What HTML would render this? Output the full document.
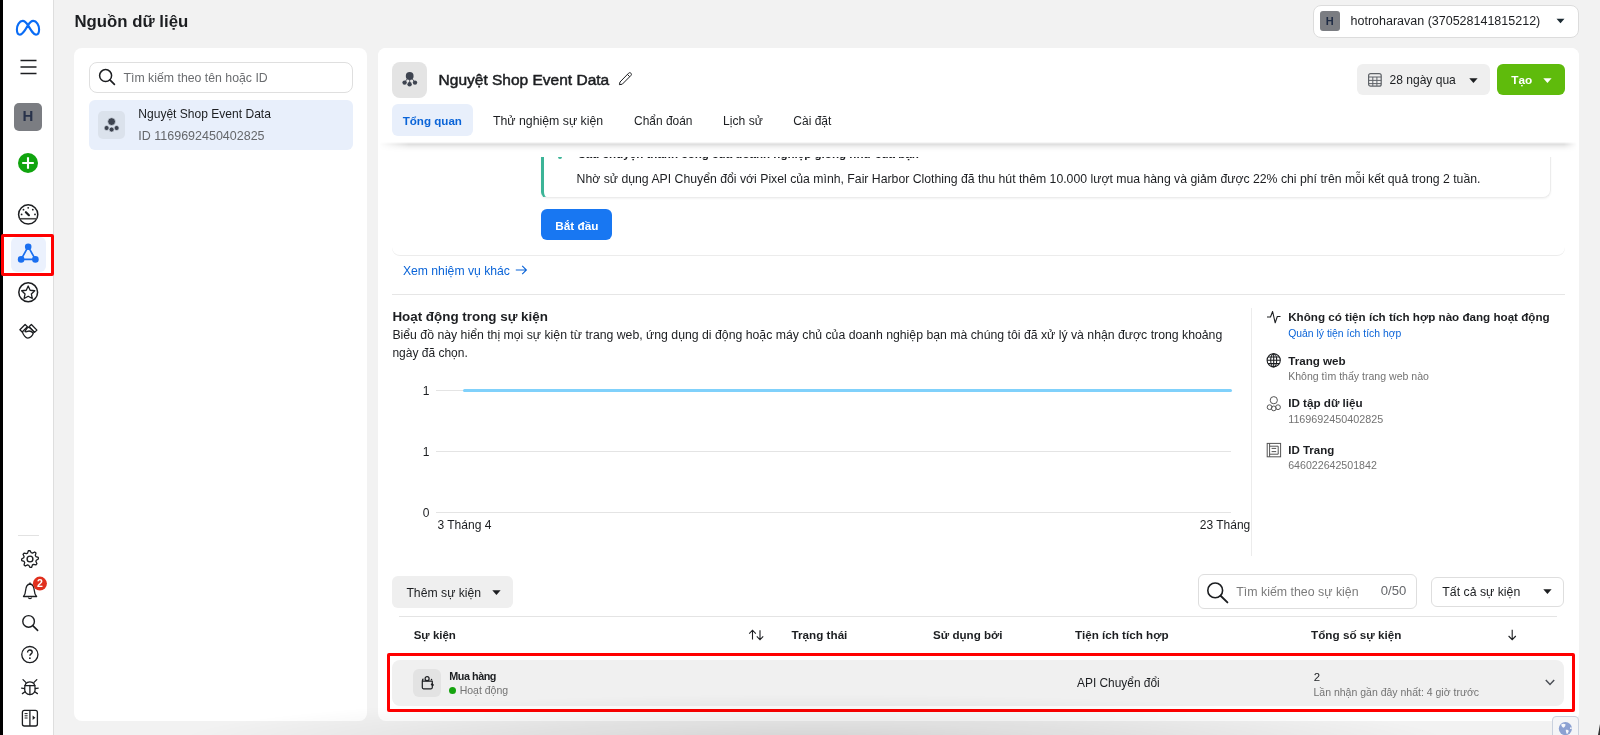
<!DOCTYPE html>
<html><head><meta charset="utf-8">
<style>
*{box-sizing:border-box;margin:0;padding:0}
html,body{width:1600px;height:735px;overflow:hidden}
body{background:#f2f2f2;font-family:"Liberation Sans",sans-serif;color:#1c1e21;position:relative}
.a{position:absolute;white-space:nowrap;line-height:1}
svg.a{overflow:visible}
</style></head><body>
<div id="root" style="position:absolute;left:0;top:0;width:1600px;height:735px;will-change:transform">
<div class="a" style="left:0px;top:0px;width:3px;height:735px;background:#000"></div>
<div class="a" style="left:3px;top:0px;width:50px;height:735px;background:#fff"></div>
<div class="a" style="left:53px;top:0px;width:1px;height:735px;background:#dedede"></div>
<svg class="a" style="left:0px;top:0px" width="50" height="50" viewBox="0 0 50 50"><path d="M28 25.2 C29.6 22.6 31.2 20.9 33.2 20.9 C36.6 20.9 39.1 25.2 39.1 29.4 C39.1 32.6 37.8 34.6 36 34.6 C33.4 34.6 31.4 31 28 25.2 C26 22.2 24.6 20.9 22.8 20.9 C19.4 20.9 16.9 25.2 16.9 29.4 C16.9 32.6 18.2 34.6 20 34.6 C22.8 34.6 25.6 29.4 28 25.2 Z" fill="none" stroke="#0a6cf5" stroke-width="2.1"/></svg>
<svg class="a" style="left:20px;top:59px" width="17" height="16" viewBox="0 0 17 16"><path d="M0.5 1.5h16M0.5 8h16M0.5 14.5h16" stroke="#1c1e21" stroke-width="1.6"/></svg>
<div class="a" style="left:14px;top:102.5px;width:28px;height:28px;border-radius:5px;background:#7b7d82;color:#28324a;font-weight:bold;font-size:15px;text-align:center;line-height:26.5px">H</div>
<svg class="a" style="left:18px;top:153px" width="20" height="20" viewBox="0 0 20 20"><circle cx="10" cy="10" r="10" fill="#10a40e"/><path d="M10 4.2v11.6M4.2 10h11.6" stroke="#fff" stroke-width="2.1"/></svg>
<svg class="a" style="left:10px;top:195px" width="36" height="36" viewBox="0 0 36 36"><circle cx="18.2" cy="19.45" r="9.6" fill="none" stroke="#1c1e21" stroke-width="1.5"/><path d="M9.4 23.75h17.6" stroke="#4a4a4a" stroke-width="1.6"/><path d="M15.9 17.2l3 3" stroke="#1c1e21" stroke-width="2.2" stroke-linecap="round"/><g fill="#1c1e21"><circle cx="11.6" cy="19.4" r="0.9"/><circle cx="13.5" cy="14.7" r="0.9"/><circle cx="18.2" cy="12.8" r="0.9"/><circle cx="22.8" cy="14.7" r="0.9"/><circle cx="25" cy="19.4" r="0.9"/></g></svg>
<div class="a" style="left:11px;top:236.5px;width:35px;height:35px;background:#ebf1fd;border-radius:6px"></div>
<svg class="a" style="left:10px;top:236px" width="36" height="36" viewBox="0 0 36 36"><path d="M18.2 10.7 L11.1 23.4 H25.4 Z" fill="none" stroke="#1a6ff0" stroke-width="1.7" stroke-linejoin="round"/><g fill="#1a6ff0"><circle cx="18.2" cy="10.7" r="3.3"/><circle cx="11.1" cy="23.4" r="3.3"/><circle cx="25.4" cy="23.4" r="3.3"/></g></svg>
<div class="a" style="left:1.1px;top:234.1px;width:52.6px;height:42.2px;border:3.2px solid #f00;border-radius:2px"></div>
<svg class="a" style="left:0px;top:0px" width="50" height="350" viewBox="0 0 50 350"><circle cx="28.2" cy="292.25" r="9.4" fill="none" stroke="#1c1e21" stroke-width="1.5"/><path d="M28.20 286.00 L30.14 290.23 L34.76 290.77 L31.34 293.92 L32.26 298.48 L28.20 296.20 L24.14 298.48 L25.06 293.92 L21.64 290.77 L26.26 290.23 Z" fill="none" stroke="#1c1e21" stroke-width="1.3" stroke-linejoin="round"/></svg>
<svg class="a" style="left:0px;top:0px" width="50" height="350" viewBox="0 0 50 350"><g fill="none" stroke="#1c1e21" stroke-width="1.3" stroke-linejoin="round" stroke-linecap="round"><path d="M19.9 329.8 L25.1 324.5 L27.4 326.8 L22.2 332 Z"/><path d="M31.4 324.5 L36.9 330.1 L34.6 332.4 L29.1 326.8 Z"/><path d="M22.4 331.8 C23.2 335 25.8 338.2 27.8 338.2 C30 338.2 33 335.6 33.2 333"/><path d="M25.2 331.6 C26.4 332.6 27.8 331 29 331 C30.8 331 32.2 332 33.2 333"/><path d="M25.2 331.6 L25.6 330.4 C26.6 328.4 27.6 327.4 28.4 327.4 C29.4 327.4 31.6 329.2 33.6 331.6"/></g></svg>
<div class="a" style="left:18px;top:534.5px;width:21px;height:1px;background:#e2e2e2"></div>
<svg class="a" style="left:12px;top:540.5px" width="36" height="36" viewBox="0 0 36 36"><path d="M26.24 16.36 L26.40 18.00 L24.28 19.25 L23.91 20.45 L24.98 22.67 L23.94 23.94 L21.56 23.32 L20.45 23.91 L19.64 26.24 L18.00 26.40 L16.75 24.28 L15.55 23.91 L13.33 24.98 L12.06 23.94 L12.68 21.56 L12.09 20.45 L9.76 19.64 L9.60 18.00 L11.72 16.75 L12.09 15.55 L11.02 13.33 L12.06 12.06 L14.44 12.68 L15.55 12.09 L16.36 9.76 L18.00 9.60 L19.25 11.72 L20.45 12.09 L22.67 11.02 L23.94 12.06 L23.32 14.44 L23.91 15.55 Z" fill="none" stroke="#1c1e21" stroke-width="1.3" stroke-linejoin="round"/><circle cx="18" cy="18" r="2.9" fill="none" stroke="#1c1e21" stroke-width="1.4"/></svg>
<svg class="a" style="left:12px;top:576px" width="36" height="30" viewBox="0 0 36 30"><path d="M11.5 20.5 C12.8 19 13.4 17.6 13.6 14.5 C13.9 10.8 15.6 8.2 18 8 C20.4 8.2 22 10.8 22.3 14.5 C22.5 17.6 23.2 19 24.6 20.5 Z" fill="none" stroke="#1c1e21" stroke-width="1.3" stroke-linejoin="round"/><path d="M16.4 21.5 C16.6 23 19.4 23 19.6 21.5" fill="none" stroke="#1c1e21" stroke-width="1.2"/><path d="M18 6.5v1.6" stroke="#1c1e21" stroke-width="1.3"/></svg>
<svg class="a" style="left:32px;top:576px" width="16" height="16" viewBox="0 0 16 16"><circle cx="7.9" cy="7.6" r="7" fill="#e0301e"/><text x="7.9" y="11.4" font-family="Liberation Sans" font-weight="bold" font-size="10.5" fill="#fff" text-anchor="middle">2</text></svg>
<svg class="a" style="left:12px;top:604px" width="36" height="36" viewBox="0 0 36 36"><circle cx="16.6" cy="17.4" r="5.8" fill="none" stroke="#1c1e21" stroke-width="1.4"/><path d="M20.8 21.6 L25.6 26.4" stroke="#1c1e21" stroke-width="1.6" stroke-linecap="round"/></svg>
<svg class="a" style="left:12px;top:635px" width="36" height="36" viewBox="0 0 36 36"><circle cx="17.85" cy="19.6" r="8.1" fill="none" stroke="#1c1e21" stroke-width="1.3"/><path d="M15.6 17.6 C15.6 15.8 16.6 15 17.9 15 C19.2 15 20.2 15.9 20.2 17.2 C20.2 18.8 17.9 19 17.9 20.8" fill="none" stroke="#1c1e21" stroke-width="1.4"/><circle cx="17.9" cy="23.2" r="0.9" fill="#1c1e21"/></svg>
<svg class="a" style="left:12px;top:670px" width="36" height="36" viewBox="0 0 36 36"><g fill="none" stroke="#1c1e21" stroke-width="1.3" stroke-linecap="round"><path d="M17.9 11.8 C14.6 11.8 12.6 14.6 12.6 18.6 C12.6 22.4 14.8 24.6 17.9 24.6 C21 24.6 23.2 22.4 23.2 18.6 C23.2 14.6 21.2 11.8 17.9 11.8 Z"/><path d="M17.9 15.4v9.2M12.8 15.6h10.2"/><path d="M13.8 12.4 L11 9.6 M22 12.4 L24.8 9.6 M12.6 18.6 L9.6 18.2 M23.2 18.6 L26.2 18.2 M13 21.8 L10.4 23.6 M22.8 21.8 L25.4 23.6"/></g></svg>
<svg class="a" style="left:12px;top:705px" width="36" height="30" viewBox="0 0 36 30"><rect x="10.4" y="5.4" width="15" height="15.6" rx="2" fill="none" stroke="#1c1e21" stroke-width="1.3"/><path d="M17.9 5.4v15.6" stroke="#1c1e21" stroke-width="1.3"/><path d="M12.6 8.6h3M12.6 10.8h3M12.6 13h3" stroke="#1c1e21" stroke-width="1"/><path d="M20.6 10.6 L23.4 12.8 L20.6 15 Z" fill="#1c1e21"/></svg>
<div class="a" style="left:74.5px;top:14px;font-size:16.8px;font-weight:bold;color:#1c1e21;">Nguồn dữ liệu</div>
<div class="a" style="left:1313px;top:5px;width:266px;height:32.5px;background:#fff;border:1px solid #dcdcdc;border-radius:8px"></div>
<div class="a" style="left:1320px;top:11px;width:19.5px;height:20px;border-radius:3px;background:#7b7d82;color:#1e2b44;font-weight:bold;font-size:11px;text-align:center;line-height:20px">H</div>
<div class="a" style="left:1350.5px;top:15px;font-size:12.5px;color:#1c1e21;">hotroharavan (370528141815212)</div>
<svg class="a" style="left:1556px;top:18px" width="9" height="6" viewBox="0 0 9 6"><path d="M0.5 0.8 H8.5 L4.5 5.2 Z" fill="#1c2b33"/></svg>
<div class="a" style="left:74px;top:47.5px;width:293px;height:673.2px;background:#fff;border-radius:8px"></div>
<div class="a" style="left:88.5px;top:61.5px;width:264px;height:31.5px;border:1px solid #dfdfdf;border-radius:8px"></div>
<svg class="a" style="left:97px;top:67px" width="20" height="20" viewBox="0 0 20 20"><circle cx="8.6" cy="8.6" r="6" fill="none" stroke="#1c1e21" stroke-width="1.5"/><path d="M12.9 12.9 L17.4 17.4" stroke="#1c1e21" stroke-width="1.7" stroke-linecap="round"/></svg>
<div class="a" style="left:123.5px;top:72px;font-size:12.3px;color:#6b6d70;">Tìm kiếm theo tên hoặc ID</div>
<div class="a" style="left:89px;top:100px;width:263.5px;height:49.5px;background:#e8effb;border-radius:6px"></div>
<div class="a" style="left:97.8px;top:111px;width:27.6px;height:27.8px;background:#dbe2ec;border-radius:5px"></div>
<svg class="a" style="left:97.8px;top:111px" width="28" height="28" viewBox="0 0 28 28"><g fill="#3e4450" stroke="#dbe2ec" stroke-width="0.7"><circle cx="13.6" cy="10.6" r="3.9"/><circle cx="8.6" cy="17" r="2.5"/><circle cx="18.6" cy="17" r="2.5"/><circle cx="13.6" cy="18.6" r="2.5"/></g></svg>
<div class="a" style="left:138.3px;top:108px;font-size:12.05px;color:#1c1e21;">Nguyệt Shop Event Data</div>
<div class="a" style="left:138.3px;top:130px;font-size:12.5px;color:#65676b;">ID 1169692450402825</div>
<div class="a" style="left:378px;top:47.5px;width:1200.5px;height:673.2px;background:#fff;border-radius:8px"></div>
<div class="a" style="left:392px;top:140px;width:1173px;height:114.5px;border-radius:0 0 8px 8px;box-shadow:0 1px 0 rgba(0,0,0,0.075)"></div>
<div class="a" style="left:541px;top:140px;width:1009.5px;height:57.7px;border:1px solid #ececec;border-left:3px solid #3cb497;border-top:none;border-radius:0 0 8px 6px;box-shadow:0 1px 2px rgba(0,0,0,0.05)"></div>
<div class="a" style="left:577.5px;top:148px;font-size:11.6px;font-weight:bold;color:#1c1e21;">Câu chuyện thành công của doanh nghiệp giống như của bạn</div>
<div class="a" style="left:557.5px;top:155px;width:4px;height:4px;border-radius:2px;background:#3cb497"></div>
<div class="a" style="left:576.6px;top:173px;font-size:12.25px;color:#1c1e21;">Nhờ sử dụng API Chuyển đổi với Pixel của mình, Fair Harbor Clothing đã thu hút thêm 10.000 lượt mua hàng và giảm được 22% chi phí trên mỗi kết quả trong 2 tuần.</div>
<div class="a" style="left:541.4px;top:208.8px;width:70.7px;height:31.4px;background:#1877f2;border-radius:6px"></div>
<div class="a" style="left:555.3px;top:220px;font-size:11.75px;font-weight:bold;color:#fff;">Bắt đầu</div>
<div class="a" style="left:402.9px;top:265px;font-size:12.2px;color:#0a64d8;">Xem nhiệm vụ khác</div>
<svg class="a" style="left:514px;top:263px" width="14" height="14" viewBox="0 0 14 14"><path d="M1.8 7h10.6M8.2 2.8 L12.4 7 L8.2 11.2" fill="none" stroke="#0a64d8" stroke-width="1.1"/></svg>
<div class="a" style="left:392px;top:293.5px;width:1173px;height:1.2px;background:#e6e6e6"></div>
<div class="a" style="left:392.4px;top:310px;font-size:13.4px;font-weight:bold;color:#1c1e21;">Hoạt động trong sự kiện</div>
<div class="a" style="left:392.4px;top:329px;font-size:12.28px;color:#1c1e21;">Biểu đồ này hiển thị mọi sự kiện từ trang web, ứng dụng di động hoặc máy chủ của doanh nghiệp bạn mà chúng tôi đã xử lý và nhận được trong khoảng</div>
<div class="a" style="left:392.4px;top:347px;font-size:12.0px;color:#1c1e21;">ngày đã chọn.</div>
<div class="a" style="left:436px;top:390.2px;width:795px;height:1.2px;background:#e4e4e4"></div>
<div class="a" style="left:422.8px;top:385px;font-size:12.0px;color:#1c1e21;">1</div>
<div class="a" style="left:436px;top:450.79999999999995px;width:795px;height:1.2px;background:#e4e4e4"></div>
<div class="a" style="left:422.8px;top:446px;font-size:12.0px;color:#1c1e21;">1</div>
<div class="a" style="left:436px;top:511.6px;width:795px;height:1.2px;background:#e4e4e4"></div>
<div class="a" style="left:422.8px;top:507px;font-size:12.0px;color:#1c1e21;">0</div>
<div class="a" style="left:462.6px;top:389.1px;width:769px;height:3px;background:#80d1fb;border-radius:1.5px"></div>
<div class="a" style="left:437.4px;top:519px;font-size:12.05px;color:#1c1e21;">3 Tháng 4</div>
<div class="a" style="left:1199.8px;top:519px;font-size:12.0px;color:#1c1e21;">23 Tháng</div>
<div class="a" style="left:1251.3px;top:308px;width:1.2px;height:248px;background:#ececec"></div>
<svg class="a" style="left:1266px;top:309px" width="16" height="16" viewBox="0 0 16 16"><path d="M1 8 H4.5 L6.6 2.5 L9.2 13.8 L11.3 7.5 H14.5" fill="none" stroke="#1c1e21" stroke-width="1.1" stroke-linejoin="round"/></svg>
<div class="a" style="left:1288.2px;top:311px;font-size:11.63px;font-weight:bold;color:#1c1e21;">Không có tiện ích tích hợp nào đang hoạt động</div>
<div class="a" style="left:1288.2px;top:329px;font-size:10.4px;color:#0a64d8;">Quản lý tiện ích tích hợp</div>
<svg class="a" style="left:1266px;top:352px" width="16" height="16" viewBox="0 0 16 16"><g fill="none" stroke="#1c1e21" stroke-width="1.1"><circle cx="7.7" cy="8.3" r="6.6"/><ellipse cx="7.7" cy="8.3" rx="3" ry="6.6"/><path d="M1.1 8.3h13.2M2 5h11.4M2 11.6h11.4M7.7 1.7v13.2"/></g></svg>
<div class="a" style="left:1288.2px;top:355px;font-size:11.63px;font-weight:bold;color:#1c1e21;">Trang web</div>
<div class="a" style="left:1288.2px;top:371px;font-size:10.55px;color:#737373;">Không tìm thấy trang web nào</div>
<svg class="a" style="left:1266px;top:395px" width="16" height="17" viewBox="0 0 16 17"><g fill="none" stroke="#555" stroke-width="1"><circle cx="7.8" cy="5.2" r="3.6"/><circle cx="3.6" cy="12.2" r="2.4"/><circle cx="7.8" cy="13.4" r="2.4"/><circle cx="12" cy="12.2" r="2.4"/></g></svg>
<div class="a" style="left:1288.2px;top:397px;font-size:11.67px;font-weight:bold;color:#1c1e21;">ID tập dữ liệu</div>
<div class="a" style="left:1288.2px;top:414px;font-size:10.77px;color:#737373;">1169692450402825</div>
<svg class="a" style="left:1266px;top:442px" width="16" height="16" viewBox="0 0 16 16"><g fill="none" stroke="#555" stroke-width="1"><rect x="1.2" y="1.4" width="13.4" height="13.4"/><path d="M3.6 1.4v13.4M3.6 4.2h8.6v8H3.6"/><path d="M5.6 6.4h4.6M5.6 9.6h4.6"/></g></svg>
<div class="a" style="left:1288.2px;top:445px;font-size:11.5px;font-weight:bold;color:#1c1e21;">ID Trang</div>
<div class="a" style="left:1288.2px;top:460px;font-size:10.64px;color:#737373;">646022642501842</div>
<div class="a" style="left:392.2px;top:576px;width:120.7px;height:31.6px;background:#efefef;border-radius:6px"></div>
<div class="a" style="left:406.4px;top:587px;font-size:12.23px;color:#1c1e21;">Thêm sự kiện</div>
<svg class="a" style="left:491.5px;top:589.5px" width="9" height="6" viewBox="0 0 9 6"><path d="M0.3 0.3 H8.6 L4.45 4.9 Z" fill="#1c1e21"/></svg>
<div class="a" style="left:1198px;top:574.3px;width:218.7px;height:34.6px;border:1px solid #dedede;border-radius:6px"></div>
<svg class="a" style="left:1205px;top:580px" width="24" height="24" viewBox="0 0 24 24"><circle cx="10.2" cy="10.4" r="7.4" fill="none" stroke="#1c1e21" stroke-width="1.6"/><path d="M15.6 15.8 L22.4 22.4" stroke="#1c1e21" stroke-width="1.9" stroke-linecap="round"/></svg>
<div class="a" style="left:1236.3px;top:586px;font-size:12.37px;color:#7b7b7b;">Tìm kiếm theo sự kiện</div>
<div class="a" style="left:1380.8px;top:584px;font-size:13.1px;color:#65676b;">0/50</div>
<div class="a" style="left:1431.3px;top:576.5px;width:132.8px;height:30.7px;border:1px solid #dedede;border-radius:6px"></div>
<div class="a" style="left:1442.3px;top:586px;font-size:12.31px;color:#1c1e21;">Tất cả sự kiện</div>
<svg class="a" style="left:1542.6px;top:589.3px" width="9" height="6" viewBox="0 0 9 6"><path d="M0.3 0.3 H8.6 L4.45 4.9 Z" fill="#1c1e21"/></svg>
<div class="a" style="left:399px;top:615.8px;width:1158px;height:1px;background:#e4e4e4"></div>
<div class="a" style="left:413.7px;top:630px;font-size:11.5px;font-weight:bold;color:#1c1e21;">Sự kiện</div>
<svg class="a" style="left:748px;top:629px" width="17" height="12" viewBox="0 0 17 12"><path d="M4.5 10.6V1.4M1.2 4.6 L4.5 1.2 L7.8 4.6M12 1.2v9.2M8.8 7.4 L12 10.8 L15.2 7.4" fill="none" stroke="#1c1e21" stroke-width="1.1"/></svg>
<div class="a" style="left:791.6px;top:629px;font-size:11.68px;font-weight:bold;color:#1c1e21;">Trạng thái</div>
<div class="a" style="left:933px;top:629px;font-size:11.62px;font-weight:bold;color:#1c1e21;">Sử dụng bởi</div>
<div class="a" style="left:1075px;top:629px;font-size:11.66px;font-weight:bold;color:#1c1e21;">Tiện ích tích hợp</div>
<div class="a" style="left:1311.1px;top:629px;font-size:11.7px;font-weight:bold;color:#1c1e21;">Tổng số sự kiện</div>
<svg class="a" style="left:1506px;top:629px" width="12" height="12" viewBox="0 0 12 12"><path d="M6.2 0.8v9.6M2.6 7 L6.2 10.6 L9.8 7" fill="none" stroke="#1c1e21" stroke-width="1.1"/></svg>
<div class="a" style="left:392.2px;top:659.8px;width:1172.2px;height:46.4px;background:#f0f0f0;border-radius:8px"></div>
<div class="a" style="left:413.3px;top:669px;width:28px;height:28.4px;background:#e3e3e3;border-radius:6px"></div>
<svg class="a" style="left:413.3px;top:669px" width="28" height="28" viewBox="0 0 28 28"><g fill="none" stroke="#1c1e21" stroke-width="1.2" stroke-linejoin="round"><path d="M9.3 12.2 H19.3 V18.6 Q19.3 19.8 18.1 19.8 H10.5 Q9.3 19.8 9.3 18.6 Z"/><circle cx="14.1" cy="9.7" r="2"/><path d="M9.4 12 C9.4 10.8 9.8 10.2 10.4 9.8"/></g><circle cx="18.5" cy="10.4" r="0.75" fill="#1c1e21"/><path d="M17.6 15.2 L19.2 13.9 L21.1 15.9 L19.5 17.6 Z" fill="#1c1e21"/></svg>
<div class="a" style="left:449.2px;top:671px;font-size:10.8px;font-weight:bold;color:#1c1e21;letter-spacing:-0.45px">Mua hàng</div>
<div class="a" style="left:448.6px;top:687px;width:7px;height:7px;border-radius:50%;background:#16a40f"></div>
<div class="a" style="left:459.7px;top:685px;font-size:10.5px;color:#737373;">Hoạt động</div>
<div class="a" style="left:1077px;top:678px;font-size:11.92px;color:#1c1e21;">API Chuyển đổi</div>
<div class="a" style="left:1313.8px;top:672px;font-size:11.4px;color:#1c1e21;">2</div>
<div class="a" style="left:1313.5px;top:687px;font-size:10.5px;color:#737373;">Lần nhận gần đây nhất: 4 giờ trước</div>
<svg class="a" style="left:1544px;top:678px" width="12" height="9" viewBox="0 0 12 9"><path d="M1.8 2 L6 6.4 L10.2 2" fill="none" stroke="#4b4f56" stroke-width="1.5"/></svg>
<div class="a" style="left:387.4px;top:653px;width:1187.6px;height:58.6px;border:3.1px solid #f00;border-radius:2px"></div>
<div class="a" style="left:54px;top:680px;width:1546px;height:55px;background:radial-gradient(ellipse 640px 48px at 760px 62px, rgba(0,0,0,0.13), rgba(0,0,0,0.07) 45%, rgba(0,0,0,0) 100%)"></div>
<div class="a" style="left:1552.2px;top:716.3px;width:26.4px;height:24px;background:#f4f5f7;border:1px solid #c9d1de;border-radius:4px"></div>
<svg class="a" style="left:0px;top:0px" width="1600" height="735" viewBox="0 0 1600 735"><circle cx="1565.4" cy="728.6" r="6.6" fill="#8ca1d2"/><g fill="#fff" opacity="0.92"><path d="M1561.2 724.6 C1562.2 723.4 1564.4 723.4 1565.6 724.4 C1565.4 725.8 1564.6 727.2 1563.4 727.8 C1562.4 727.6 1561.2 726 1561.2 724.6 Z"/><path d="M1565.8 729.8 C1567 729.6 1568.6 730.2 1568.8 731 C1568.4 732.4 1567.6 733.6 1566.8 734.2 C1566.4 732.8 1565.6 731 1565.8 729.8 Z"/><circle cx="1570.9" cy="728.2" r="0.9"/></g></svg>
<div class="a" style="left:1598px;top:724px;width:0;height:0;border-left:2px solid transparent;border-bottom:11px solid #333"></div>
<div class="a" style="left:378px;top:47.5px;width:1200.5px;height:109.5px;background:#fff;border-radius:8px 8px 0 0"></div>
<div class="a" style="left:379px;top:142px;width:1198px;height:10px;-webkit-mask-image:linear-gradient(to right,transparent 0,#000 30px,#000 1185px,transparent 1198px);background:linear-gradient(rgba(0,0,0,0) 0px,rgba(0,0,0,0.07) 1px,rgba(0,0,0,0.13) 2.2px,rgba(0,0,0,0.08) 4px,rgba(0,0,0,0.035) 6px,rgba(0,0,0,0.01) 8px,rgba(0,0,0,0) 10px)"></div>
<div class="a" style="left:392px;top:62px;width:35.2px;height:35.6px;background:#e4e4e4;border-radius:8px"></div>
<svg class="a" style="left:392px;top:62px" width="36" height="36" viewBox="0 0 36 36"><g fill="#3e4450"><circle cx="17.7" cy="14" r="3.9"/><circle cx="12.6" cy="20.6" r="2.2"/><circle cx="17.6" cy="22.3" r="2.2"/><circle cx="23" cy="20.6" r="2.2"/></g><path d="M17.7 16v6M15.5 16.5 L12.8 20M19.9 16.5 L22.8 20" stroke="#3e4450" stroke-width="0.9"/></svg>
<div class="a" style="left:438.6px;top:72px;font-size:15.5px;color:#1c1e21;-webkit-text-stroke:0.5px #1c1e21">Nguyệt Shop Event Data</div>
<svg class="a" style="left:617px;top:70px" width="17" height="16" viewBox="0 0 17 16"><path d="M3 12 L11.6 3.2 C12.3 2.5 13.2 2.5 13.9 3.2 C14.6 3.9 14.6 4.8 13.9 5.5 L5.3 14.2 L2.4 14.7 Z M10.4 4.4 L12.7 6.7" fill="none" stroke="#1c1e21" stroke-width="1" stroke-linejoin="round"/></svg>
<div class="a" style="left:392px;top:104.4px;width:80.7px;height:31.8px;background:#e8effb;border-radius:6px"></div>
<div class="a" style="left:402.7px;top:115px;font-size:11.6px;font-weight:bold;color:#0a64d8;">Tổng quan</div>
<div class="a" style="left:493px;top:115px;font-size:12.3px;color:#1c1e21;">Thử nghiệm sự kiện</div>
<div class="a" style="left:634.1px;top:116px;font-size:11.95px;color:#1c1e21;">Chẩn đoán</div>
<div class="a" style="left:723.1px;top:115px;font-size:12.1px;color:#1c1e21;">Lịch sử</div>
<div class="a" style="left:793.3px;top:115px;font-size:12.0px;color:#1c1e21;">Cài đặt</div>
<div class="a" style="left:1357.2px;top:64px;width:132.5px;height:31px;background:#efefef;border-radius:6px"></div>
<svg class="a" style="left:1367px;top:72px" width="16" height="16" viewBox="0 0 16 16"><rect x="1.6" y="1.6" width="12.6" height="12.6" rx="2" fill="none" stroke="#5f6368" stroke-width="1.2"/><path d="M1.6 5h12.6M1.6 8.4h12.6M1.6 11.6h12.6M5.8 5v9M9.9 5v9" stroke="#5f6368" stroke-width="1"/></svg>
<div class="a" style="left:1389.5px;top:74px;font-size:12.05px;color:#1c1e21;">28 ngày qua</div>
<svg class="a" style="left:1469px;top:77.5px" width="9" height="6" viewBox="0 0 9 6"><path d="M0.3 0.3 H8.6 L4.45 4.9 Z" fill="#1c1e21"/></svg>
<div class="a" style="left:1497px;top:64px;width:67.5px;height:31px;background:#5fbb0c;border-radius:6px"></div>
<div class="a" style="left:1511.3px;top:75px;font-size:11.8px;font-weight:bold;color:#fff;">Tạo</div>
<svg class="a" style="left:1542.5px;top:77.5px" width="9" height="6" viewBox="0 0 9 6"><path d="M0.3 0.3 H8.6 L4.45 4.9 Z" fill="#fff"/></svg>
</div></body></html>
